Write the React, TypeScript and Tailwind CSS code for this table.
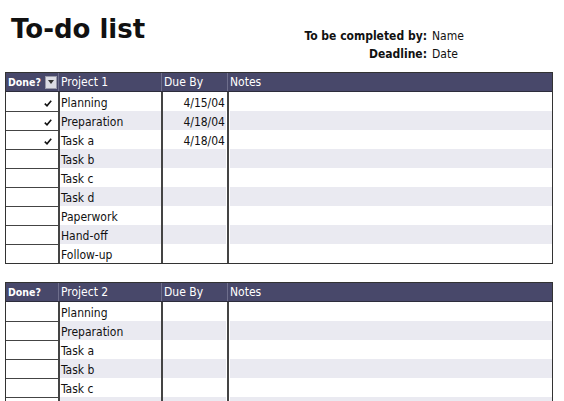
import React from "react";

type Row = { task: string; due?: string; done?: boolean };

const project1: Row[] = [
  { task: "Planning", due: "4/15/04", done: true },
  { task: "Preparation", due: "4/18/04", done: true },
  { task: "Task a", due: "4/18/04", done: true },
  { task: "Task b" },
  { task: "Task c" },
  { task: "Task d" },
  { task: "Paperwork" },
  { task: "Hand-off" },
  { task: "Follow-up" },
];

// last row is only partly on screen, its text falls below the edge
const project2: Row[] = [
  { task: "Planning" },
  { task: "Preparation" },
  { task: "Task a" },
  { task: "Task b" },
  { task: "Task c" },
  { task: "" },
];

const Check = () => (
  <svg width="8" height="7" viewBox="0 0 8 7" className="block">
    <path d="M0.8 3.6 L3 5.8 L7.2 0.8" fill="none" stroke="#111" strokeWidth="1.6" />
  </svg>
);

const TodoTable: React.FC<{ title: string; rows: Row[]; filter?: boolean }> = ({
  title,
  rows,
  filter,
}) => {
  return (
    <div className="ml-[5px] w-[548px] border border-[#333] bg-white">
      {/* header */}
      <div className="flex h-[19px] bg-[#48486a] text-white text-[12px] leading-[18px] border-b border-[#2c2c3c]">
        <div className="w-[52px] flex items-center justify-between pl-[2px] pr-[1px]">
          <span className="font-bold text-[10.5px]">Done?</span>
          {filter && (
            <span className="w-[12px] h-[13px] bg-[#dcdce4] border border-[#9a9aaa] flex items-center justify-center">
              <svg width="6" height="4" viewBox="0 0 6 4">
                <path d="M0 0 H6 L3 4 Z" fill="#333" />
              </svg>
            </span>
          )}
        </div>
        <div className="w-[103px] border-l border-[#6e6e8c] pl-[2px]">{title}</div>
        <div className="w-[66px] border-l border-[#6e6e8c] pl-[2px]">Due By</div>
        <div className="flex-1 border-l border-[#6e6e8c] pl-[2px]">Notes</div>
      </div>
      {rows.map((r, i) => {
        const shade = i % 2 === 1 ? "bg-[#eaeaf1]" : "bg-white";
        return (
          <div key={i} className="flex h-[19px] text-[12px] leading-[17px] text-[#111]">
            <div
              className={
                "w-[52px] flex items-center justify-end pr-[6px] pt-[3px] " +
                (i > 0 ? "border-t border-[#444]" : "")
              }
            >
              {r.done && <Check />}
            </div>
            <div className="w-[103px] border-l-2 border-[#444] flex">
              <div className={"flex-1 pl-[1px] pt-[3px] " + shade}>{r.task}</div>
            </div>
            <div className="w-[66px] border-l-2 border-[#444] flex">
              <div className={"flex-1 mr-[1px] text-right pr-[1px] pt-[3px] " + shade}>{r.due}</div>
            </div>
            <div className="flex-1 border-l-2 border-[#444] flex">
              <div className={"flex-1 ml-[1px] " + shade}></div>
            </div>
          </div>
        );
      })}
    </div>
  );
};

export default function App() {
  return (
    <div className="w-[564px] h-[401px] overflow-hidden bg-white font-['DejaVu_Sans_Condensed','DejaVu_Sans',sans-serif] text-[#111]">
      <div className="flex h-[72px]">
        <div className="pl-[11px] pt-[13px] text-[26px] font-bold leading-[33px] w-[300px] font-['DejaVu_Sans',sans-serif]">
          To-do list
        </div>
        <div className="pt-[27px] text-[12px] leading-[18px]">
          <div className="flex">
            <span className="w-[127px] text-right font-bold">To be completed by:</span>
            <span className="pl-[5px]">Name</span>
          </div>
          <div className="flex">
            <span className="w-[127px] text-right font-bold">Deadline:</span>
            <span className="pl-[5px]">Date</span>
          </div>
        </div>
      </div>
      <TodoTable title="Project 1" rows={project1} filter />
      <div className="h-[18px]" />
      <TodoTable title="Project 2" rows={project2} />
    </div>
  );
}
